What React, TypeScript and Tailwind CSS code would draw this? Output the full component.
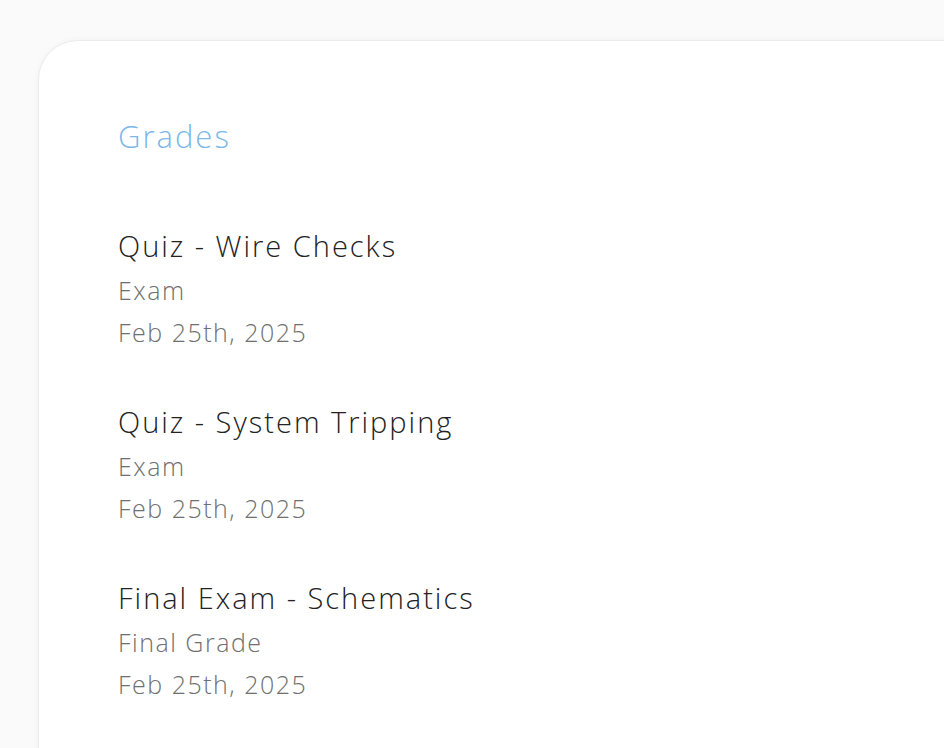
const grades = [
  { title: "Quiz - Wire Checks", kind: "Exam", date: "Feb 25th, 2025" },
  { title: "Quiz - System Tripping", kind: "Exam", date: "Feb 25th, 2025" },
  { title: "Final Exam - Schematics", kind: "Final Grade", date: "Feb 25th, 2025" },
];

export default function App() {
  return (
    <div
      className="h-[748px] w-[944px] overflow-hidden bg-[#fafafa] pl-[38px] pt-[40px]"
      style={{ fontFamily: "'Open Sans', 'Noto Sans', sans-serif" }}
    >
      <div className="h-[760px] w-[960px] rounded-tl-[40px] border border-[#ececec] bg-white pl-[79px] pt-[75px] shadow-[0_0_6px_rgba(0,0,0,0.04)]">
        <h2 className="text-[31px] font-light leading-[40px] tracking-[2px] text-[#7cb8e8]">Grades</h2>

        <div className="mt-[70px] flex flex-col gap-[49px]">
          {grades.map((g) => (
            <div key={g.title} className="flex flex-col">
              <div className="text-[29px] font-light leading-[40px] tracking-[2px] text-[#222222]">{g.title}</div>
              <div className="mt-[3px] text-[25px] font-light leading-[42px] tracking-[1.5px] text-[#6f6f6f]">{g.kind}</div>
              <div className="text-[25px] font-light leading-[42px] tracking-[1.5px] text-[#6f6f6f]">{g.date}</div>
            </div>
          ))}
        </div>
      </div>
    </div>
  );
}
